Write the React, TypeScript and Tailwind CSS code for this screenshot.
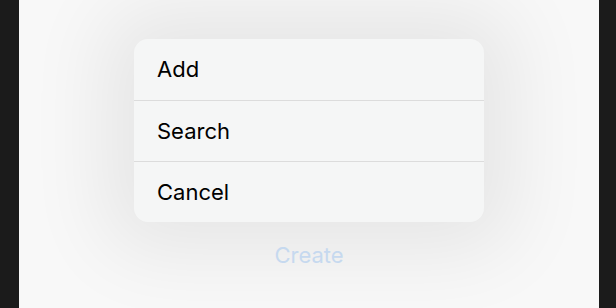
import React from 'react';

const items = ['Add', 'Search', 'Cancel'];

const App = () => {
    return (
        <div className="flex h-[308px] w-full bg-[#1b1b1b]" style={{ fontFamily: 'Inter, "Noto Sans", sans-serif' }}>
            <div className="w-[19px] shrink-0" />
            {/* Sheet area */}
            <div className="flex flex-1 flex-col items-center overflow-hidden bg-[#f8f8f8] pt-[39px]">
                <div className="w-[350px] overflow-hidden rounded-[14px] bg-[#f5f6f6] shadow-[0_0_80px_30px_rgba(0,0,0,0.075)]">
                    {items.map((item, i) => (
                        <div
                            key={item}
                            className={`flex h-[61px] items-center px-[23px] text-[22px] text-black ${i > 0 ? 'border-t border-[#dcdcdc]' : ''}`}
                        >
                            {item}
                        </div>
                    ))}
                </div>
                <div className="mt-[17px] text-[22px] text-[#c6d9ef]">Create</div>
            </div>
            <div className="w-[17px] shrink-0" />
        </div>
    );
};

export default App;
